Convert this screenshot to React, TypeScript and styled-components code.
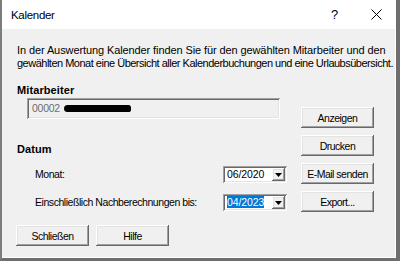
import styled, { createGlobalStyle } from 'styled-components';

const GlobalStyle = createGlobalStyle`
  html, body {
    margin: 0;
    padding: 0;
    background: #f0f0f0;
  }
  body {
    font-family: 'Liberation Sans', Arial, sans-serif;
    color: #000;
  }
`;

const Arrow = () => (
  <svg width="7" height="4" viewBox="0 0 7 4">
    <path d="M0 0 H7 L3.5 4 Z" fill="#000" />
  </svg>
);

export default function App() {
  return (
    <>
      <GlobalStyle />
      <Window>
        <TitleBar>
          <Title>Kalender</Title>
          <HelpGlyph>?</HelpGlyph>
          <CloseGlyph>
            <svg width="11" height="11" viewBox="0 0 11 11">
              <path d="M0.5 0.5 L10.5 10.5 M10.5 0.5 L0.5 10.5" stroke="#000" strokeWidth="1" />
            </svg>
          </CloseGlyph>
        </TitleBar>
        <Client>
          <Description>
            <Line $track={-0.1}>
              In der Auswertung Kalender finden Sie für den gewählten Mitarbeiter und den
            </Line>
            <Line $track={-0.5}>
              gewählten Monat eine Übersicht aller Kalenderbuchungen und eine Urlaubsübersicht.
            </Line>
          </Description>
          <Body>
            <LeftCol>
              <SectionTitle>Mitarbeiter</SectionTitle>
              <Field>
                00002
                <Redaction />
              </Field>
              <SectionTitle $top={24}>Datum</SectionTitle>
              <FieldRow $top={10}>
                <Label>Monat:</Label>
                <Combo>
                  <ComboText>06/2020</ComboText>
                  <DropButton>
                    <Arrow />
                  </DropButton>
                </Combo>
              </FieldRow>
              <FieldRow $top={11}>
                <Label>Einschließlich Nachberechnungen bis:</Label>
                <Combo>
                  <ComboText>
                    <Selected>04/2023</Selected>
                  </ComboText>
                  <DropButton>
                    <Arrow />
                  </DropButton>
                </Combo>
              </FieldRow>
            </LeftCol>
            <ButtonCol>
              <Button>Anzeigen</Button>
              <Button>Drucken</Button>
              <Button>E-Mail senden</Button>
              <Button>Export...</Button>
            </ButtonCol>
          </Body>
          <Footer>
            <Button>Schließen</Button>
            <Button>Hilfe</Button>
          </Footer>
        </Client>
      </Window>
    </>
  );
}

const Window = styled.div`
  width: 400px;
  height: 261px;
  box-sizing: border-box;
  display: flex;
  flex-direction: column;
  border-left: 2px solid #7c7c7c;
  border-right: 4px solid #6e6e6e;
  border-bottom: 3px solid #6e6e6e;
  background: #fff;
`;

const TitleBar = styled.div`
  flex: none;
  height: 29px;
  display: flex;
  align-items: center;
  padding-left: 9px;
  background: #fff;
  font-size: 11.5px;
  letter-spacing: -0.3px;
`;

const Title = styled.span`
  flex: 1;
`;

const HelpGlyph = styled.span`
  font-size: 13px;
  margin-right: 33px;
`;

const CloseGlyph = styled.span`
  display: flex;
  margin-right: 14px;
`;

const Client = styled.div`
  flex: 1;
  display: flex;
  flex-direction: column;
  padding: 15px 0 0 15px;
  background: #f0f0f0;
  border-right: 1px solid #fff;
  border-bottom: 1px solid #fff;
  font-size: 10.5px;
  line-height: 13px;
`;

const Description = styled.div`
  font-size: 11px;
  white-space: nowrap;
`;

const Line = styled.div<{ $track: number }>`
  letter-spacing: ${(p) => p.$track}px;
`;

const Body = styled.div`
  display: flex;
  margin-top: 14px;
`;

const LeftCol = styled.div`
  width: 284px;
  display: flex;
  flex-direction: column;
`;

const SectionTitle = styled.div<{ $top?: number }>`
  height: 13px;
  margin-top: ${(p) => p.$top ?? 0}px;
  font-size: 11px;
  font-weight: bold;
  letter-spacing: 0.1px;
`;

const sunken = `
  box-shadow: inset 1px 1px #a0a0a0, inset -1px -1px #ffffff,
    inset 2px 2px #696969, inset -2px -2px #e3e3e3;
`;

const raised = `
  box-shadow: inset -1px -1px #696969, inset 1px 1px #ffffff,
    inset -2px -2px #a0a0a0, inset 2px 2px #e3e3e3;
`;

const Field = styled.div`
  box-sizing: border-box;
  width: 253px;
  height: 21px;
  margin: 1px 0 0 10px;
  padding-left: 5px;
  display: flex;
  align-items: center;
  gap: 4px;
  color: #6d6d6d;
  letter-spacing: -0.25px;
  background: #f0f0f0;
  ${sunken}
`;

const Redaction = styled.span`
  width: 67px;
  height: 7px;
  border-radius: 4px 3px 3px 4px;
  background: #000;
`;

const FieldRow = styled.div<{ $top: number }>`
  display: grid;
  grid-template-columns: 206px 64px;
  align-items: center;
  height: 17px;
  margin-top: ${(p) => p.$top}px;
`;

const Label = styled.span`
  padding-left: 18px;
  white-space: nowrap;
  letter-spacing: -0.45px;
`;

const Combo = styled.div`
  box-sizing: border-box;
  height: 17px;
  display: flex;
  align-items: center;
  background: #fff;
  ${sunken}
`;

const ComboText = styled.span`
  flex: 1;
  padding-left: 4px;
  letter-spacing: -0.1px;
`;

const Selected = styled.span`
  background: #0078d7;
  color: #fff;
`;

const DropButton = styled.span`
  box-sizing: border-box;
  width: 13px;
  height: 13px;
  margin-right: 2px;
  display: flex;
  align-items: center;
  justify-content: center;
  background: #f0f0f0;
  ${raised}
`;

const ButtonCol = styled.div`
  display: flex;
  flex-direction: column;
  gap: 7px;
  padding-top: 23px;
`;

const Button = styled.button`
  box-sizing: border-box;
  width: 73px;
  height: 21px;
  padding: 0;
  border: none;
  background: #f0f0f0;
  font-family: inherit;
  font-size: 10.5px;
  letter-spacing: -0.5px;
  color: #000;
  ${raised}
`;

const Footer = styled.div`
  display: flex;
  gap: 7px;
  margin: 13px 0 0 -1px;
`;
